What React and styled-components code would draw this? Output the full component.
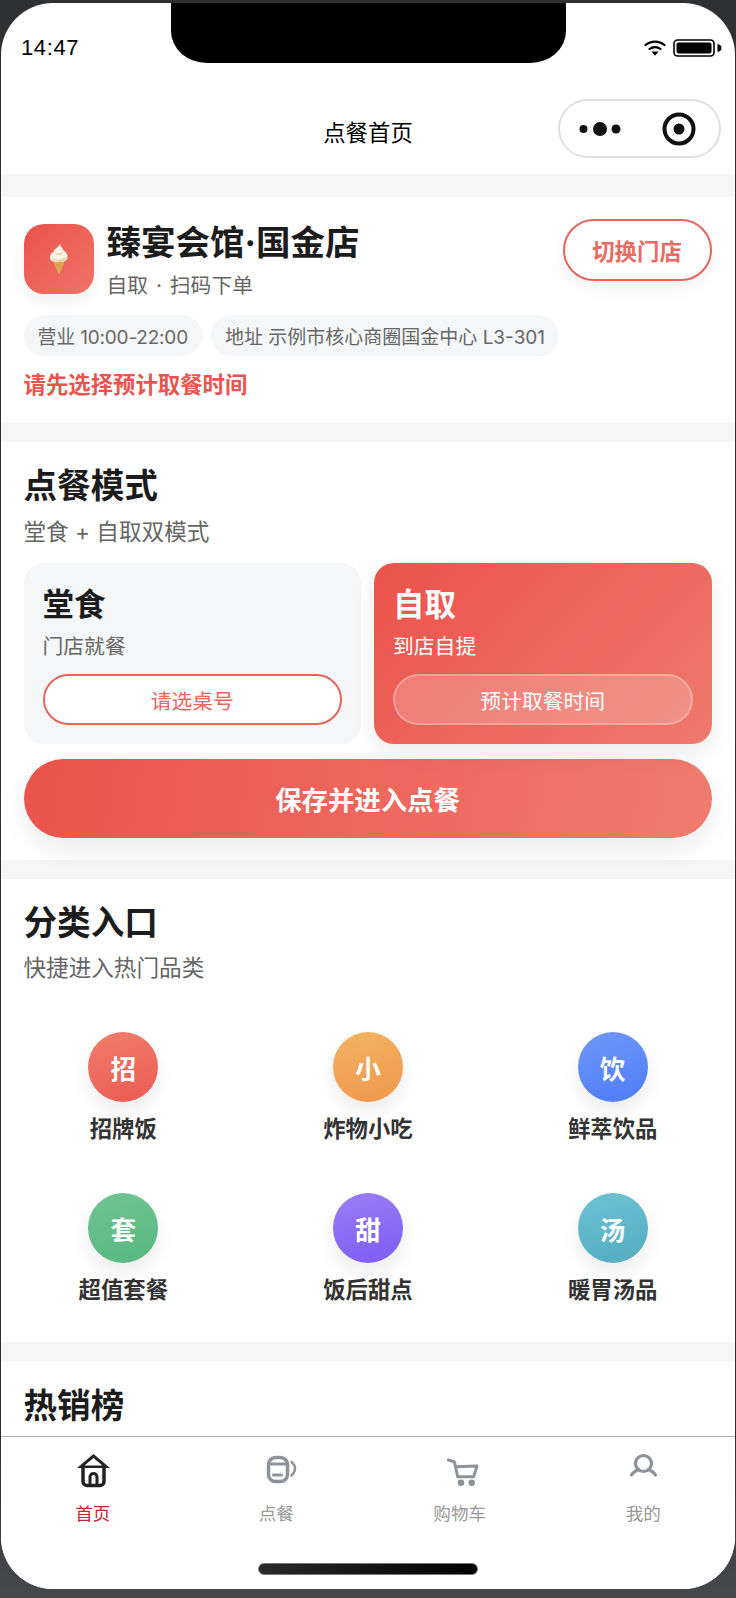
import React from "react";
import styled, { createGlobalStyle } from "styled-components";

const Global = createGlobalStyle`
  html, body { margin: 0; padding: 0; }
  body { font-family: Inter, "Noto Sans CJK SC", sans-serif; }
  * { box-sizing: border-box; }
`;
const Frame = styled.div`
  width: 736px; height: 1598px; padding: 3px 1px 9px;
  background: linear-gradient(180deg, #2f3032 0%, #2f3032 90%, #48494c 100%);
  overflow: hidden;
`;
const Phone = styled.div`
  position: relative; width: 734px; height: 1586px; background: #fff;
  border-radius: 52px; overflow: hidden; display: flex; flex-direction: column;
`;
const Notch = styled.div`
  position: absolute; top: 0; left: 170px; width: 395px; height: 60px;
  background: #000; border-radius: 0 0 36px 36px / 0 0 32px 32px;
`;
const StatusRow = styled.div`
  height: 90px; flex: none; display: flex; align-items: center; justify-content: space-between;
  padding: 0 13px 0 20px;
`;
const Time = styled.span`
  font: 400 22px "Liberation Sans", sans-serif; color: #000; letter-spacing: 0.6px;
`;
const StatusIcons = styled.div`display: flex; align-items: center; gap: 7px;`;
const NavRow = styled.div`
  height: 81px; flex: none; display: grid; grid-template-columns: 1fr auto 1fr; align-items: center;
  padding: 0 14px;
`;
const NavTitle = styled.div`
  grid-column: 2; font-size: 22.4px; font-weight: 400; color: #000; line-height: 30px; margin-bottom: 2px;
`;
const Capsule = styled.div`
  grid-column: 3; justify-self: end; width: 163px; height: 59px; margin-bottom: 10px;
  border: 2.5px solid #e0e0e0; border-radius: 30px; display: flex; align-items: center;
  padding: 0 23px 0 19px; justify-content: space-between; background: #fff;
`;
const Main = styled.main`
  flex: 1; min-height: 0; overflow: hidden; background: #f6f6f6; padding-top: 23px;
  display: flex; flex-direction: column; gap: 19px;
`;
const Section = styled.section`
  flex: none; background: #fff; padding: ${p => p.$pt ?? 22}px 23.5px ${p => p.$pb ?? 23}px 22.5px;
`;
const StoreHead = styled.div`display: flex; align-items: flex-start; gap: 13px;`;
const StoreLogo = styled.div`
  width: 70px; height: 70px; margin-top: 5px; flex: none; border-radius: 20px;
  background: linear-gradient(135deg, #eb524c, #ef7468);
  display: flex; align-items: center; justify-content: center;
  box-shadow: 0 8px 18px rgba(0,0,0,.06);
`;
const StoreInfo = styled.div`flex: 1; padding-top: 4px;`;
const StoreName = styled.div`
  font-size: 34.5px; font-weight: 700; color: #1c1c1c; line-height: 40px;
`;
const StoreSub = styled.div`
  margin-top: 12px; font-size: 20.8px; line-height: 22px; color: #666; word-spacing: 2px;
`;
const SwitchBtn = styled.div`
  width: 149px; height: 62px; flex: none; border: 2px solid #e5655d; border-radius: 31px;
  display: flex; align-items: center; justify-content: center; background: #fff;
  font-size: 22.4px; font-weight: 700; color: #e96a60; box-shadow: 0 8px 18px rgba(0,0,0,.05);
`;
const Chips = styled.div`display: flex; gap: 9px; margin-top: 18px;`;
const Chip = styled.div`
  height: 41px; padding: 0 14px; border-radius: 21px; background: #f5f6f8; color: #666;
  font-size: 19px; display: flex; align-items: center; white-space: nowrap;
  letter-spacing: ${p => p.$tight ? "-0.2px" : "0"};
`;
const Warning = styled.div`
  margin-top: 14px; font-size: 22.4px; line-height: 30px; font-weight: 700; color: #e8554e;
`;
const Title = styled.h2`
  margin: 0; font-size: 33.6px; line-height: 44px; font-weight: 700; color: #1c1c1c;
`;
const Sub = styled.div`
  margin-top: ${p => p.$mt ?? 9}px; font-size: 22.6px; line-height: 30px; color: #666;
`;
const ModeGrid = styled.div`
  display: grid; grid-template-columns: 1fr 1fr; gap: 13px; margin-top: 16px;
`;
const ModeCard = styled.div`
  height: 181px; border-radius: 20px; padding: 22px 19px 18px 19px;
  background: ${p => p.$active ? "linear-gradient(135deg, #eb524c, #ee7a6c)" : "#f5f6f8"};
  box-shadow: ${p => p.$active ? "0 10px 24px rgba(0,0,0,.08)" : "none"};
  color: ${p => p.$active ? "#fff" : "#1c1c1c"};
`;
const ModeName = styled.div`font-size: 31.5px; font-weight: 700; line-height: 40px;`;
const ModeDesc = styled.div`
  margin-top: 8px; font-size: 20.8px; line-height: 28px;
  color: ${p => p.$active ? "#fff" : "#666"};
`;
const ModeBtn = styled.div`
  margin-top: 13px; height: 51px; border-radius: 26px; display: flex; align-items: center; justify-content: center;
  font-size: 20.8px;
  border: 2px solid ${p => p.$active ? "rgba(255,255,255,.25)" : "#e5655d"};
  background: ${p => p.$active ? "rgba(255,255,255,.2)" : "#fff"};
  color: ${p => p.$active ? "#fff" : "#e9665e"};
`;
const Cta = styled.div`
  margin-top: 15px; height: 79px; border-radius: 40px; display: flex; align-items: center; justify-content: center;
  background: linear-gradient(100deg, #eb524c, #ef7c6e); color: #fff; font-size: 26.4px; font-weight: 700;
  box-shadow: 0 12px 26px rgba(0,0,0,.08);
`;
const CatGrid = styled.div`
  margin: 49px -23.5px 0 -22.5px; display: grid; grid-template-columns: repeat(3, 1fr); row-gap: 49.5px;
`;
const Cat = styled.div`display: flex; flex-direction: column; align-items: center;`;
const CatDot = styled.div`
  width: 70px; height: 70px; border-radius: 50%; display: flex; align-items: center; justify-content: center;
  color: #fff; font-size: 25.6px; font-weight: 700;
  background: linear-gradient(165deg, ${p => p.$from}, ${p => p.$to});
  box-shadow: 0 10px 20px rgba(0,0,0,.08);
`;
const CatLabel = styled.div`
  margin-top: 11.5px; font-size: 22.4px; line-height: 30px; font-weight: 700; color: #333;
`;
const TabBar = styled.nav`
  flex: none; height: 153px; border-top: 1px solid #b3b3b3; background: #fff;
  display: flex; flex-direction: column; align-items: center;
`;
const Tabs = styled.div`
  align-self: stretch; display: grid; grid-template-columns: repeat(4, 1fr); padding-top: 15px;
`;
const Tab = styled.div`display: flex; flex-direction: column; align-items: center;`;
const TabIcon = styled.svg`width: 40px; height: 36px; overflow: visible; display: block;`;
const TabLabel = styled.div`
  margin-top: 13px; font-size: 17.6px; line-height: 26px;
  color: ${p => p.$active ? "#c9252f" : "#999"};
`;
const HomeBar = styled.div`
  margin-top: 36px; width: 220px; height: 12px; border-radius: 6px; border: 1px solid #777;
  background: linear-gradient(90deg, #2a2a2a, #000);
`;

const cats = [
  ["招", "招牌饭", "#ef7d6b", "#ec5b53"],
  ["小", "炸物小吃", "#f2b366", "#f0974a"],
  ["饮", "鲜萃饮品", "#6f98f8", "#4f7bf6"],
  ["套", "超值套餐", "#70c594", "#57b77f"],
  ["甜", "饭后甜点", "#9c7df5", "#7b5cf2"],
  ["汤", "暖胃汤品", "#6dc3d3", "#54abc0"],
];

const stroke = { fill: "none", strokeLinecap: "round", strokeLinejoin: "round" };
const HomeIcon = () => (
  <TabIcon viewBox="0 0 40 36">
    <path d="M4 16 20.500 2 37 16Z" fill="#222" />
    <path d="M11.500 13.500 20.500 6 29.500 13.500Z" fill="#fff" />
    <g {...stroke} stroke="#222">
      <path d="M10 15v14.500a4 4 0 0 0 4 4h13a4 4 0 0 0 4-4V15" strokeWidth="3.500" />
      <path d="M17 32V25a3.500 3.500 0 0 1 7 0V32" strokeWidth="3" />
    </g>
  </TabIcon>
);
const DrinkIcon = () => (
  <TabIcon viewBox="0 0 40 36">
    <g {...stroke} stroke="#8e9299">
      <rect x="12.500" y="5.500" width="19" height="24" rx="7" strokeWidth="3.500" />
      <path d="M12.500 12h19" strokeWidth="3" />
      <path d="M17.500 23h8" strokeWidth="3" />
      <path d="M35.500 10c2.500 2 3.500 4 3.500 6.500s-1 4.500-3.500 7" strokeWidth="2.500" />
    </g>
  </TabIcon>
);
const CartIcon = () => (
  <TabIcon viewBox="0 0 40 36">
    <g {...stroke} stroke="#8e9299" strokeWidth="3">
      <path d="M8.300 8 14.300 9.700 17.700 24.700H33.700L37 14 15.700 14.700" />
    </g>
    <circle cx="21" cy="30.700" r="3.200" fill="#8e9299" />
    <circle cx="31.700" cy="30.700" r="3.200" fill="#8e9299" />
  </TabIcon>
);
const UserIcon = () => (
  <TabIcon viewBox="0 0 40 36">
    <g {...stroke} stroke="#8e9299" strokeWidth="3.200">
      <circle cx="20.500" cy="11.500" r="8" />
      <path d="M8.500 23c1.500-2.500 3.500-4 7-5.500M32.500 23c-1.500-2.500-3.500-4-7-5.500" />
    </g>
  </TabIcon>
);
const tabs = [
  ["首页", HomeIcon, true],
  ["点餐", DrinkIcon, false],
  ["购物车", CartIcon, false],
  ["我的", UserIcon, false],
];

const IceCream = () => (
  <svg width="20" height="32" viewBox="0 0 20 32">
    <path d="M4 17.500 10 31.800 16 17.500Z" fill="#e0aa55" />
    <path d="M6 20.500l7.500 4M12 19l-4.500 5" stroke="#c8913c" strokeWidth=".5" fill="none" />
    <path d="M11 1c.500 3 3 4 3.500 6.500 2.500 1.500 4.500 4 4 7-.500 3.500-3 4.500-9 4.500S1.500 18 1 15c-.500-3 1.500-5 3.500-6C5 5.500 9 5 11 1Z" fill="#f8f3e2" />
    <path d="M3 15.500c4 2 10 1.500 15-2-.500 4-3 5.500-8 5.500-4 0-6.500-1-7-3.500ZM6 9.500c3 1.500 6 1 8-1.500.300 2.500-2 4-4 4s-3.500-1-4-2.500Z" fill="#dfd6b0" />
  </svg>
);

export default function App() {
  return (
    <>
      <Global />
      <Frame>
        <Phone>
          <Notch />
          <StatusRow>
            <Time>14:47</Time>
            <StatusIcons>
              <svg width="22" height="16" viewBox="0 0 22 16">
                <g fill="none" stroke="#000" strokeWidth="2.200" strokeLinecap="round">
                  <path d="M1.500 5C7 .5 15 .5 20.500 5" />
                  <path d="M5.500 9c3-2.500 8-2.500 11 0" />
                </g>
                <path d="M7.500 11.500h7L11 15.800Z" fill="#000" />
              </svg>
              <svg width="49" height="18" viewBox="0 0 49 18">
                <rect x="1" y="1" width="40" height="16" rx="3.500" fill="#fff" stroke="#000" strokeWidth="1.600" />
                <rect x="3.500" y="3.500" width="35" height="11" rx="2" fill="#000" />
                <path d="M44.500 5c2.500.5 4 2 4 4s-1.500 3.500-4 4Z" fill="#000" />
              </svg>
            </StatusIcons>
          </StatusRow>
          <NavRow>
            <NavTitle>点餐首页</NavTitle>
            <Capsule>
              <svg width="48" height="16" viewBox="0 0 48 16">
                <circle cx="4.500" cy="8" r="4" fill="#111" />
                <circle cx="21" cy="8" r="7" fill="#111" />
                <circle cx="37" cy="8" r="4.500" fill="#111" />
              </svg>
              <svg width="34" height="34" viewBox="0 0 34 34">
                <circle cx="17" cy="17" r="14.500" fill="none" stroke="#111" strokeWidth="4" />
                <circle cx="17" cy="17" r="5.500" fill="#111" />
              </svg>
            </Capsule>
          </NavRow>
          <Main>
            <Section>
              <StoreHead>
                <StoreLogo><IceCream /></StoreLogo>
                <StoreInfo>
                  <StoreName>臻宴会馆·国金店</StoreName>
                  <StoreSub>自取 · 扫码下单</StoreSub>
                </StoreInfo>
                <SwitchBtn>切换门店</SwitchBtn>
              </StoreHead>
              <Chips>
                <Chip $tight>营业 10:00-22:00</Chip>
                <Chip>地址 示例市核心商圈国金中心 L3-301</Chip>
              </Chips>
              <Warning>请先选择预计取餐时间</Warning>
            </Section>
            <Section $pb={22}>
              <Title>点餐模式</Title>
              <Sub>堂食 + 自取双模式</Sub>
              <ModeGrid>
                <ModeCard>
                  <ModeName>堂食</ModeName>
                  <ModeDesc>门店就餐</ModeDesc>
                  <ModeBtn>请选桌号</ModeBtn>
                </ModeCard>
                <ModeCard $active>
                  <ModeName>自取</ModeName>
                  <ModeDesc $active>到店自提</ModeDesc>
                  <ModeBtn $active>预计取餐时间</ModeBtn>
                </ModeCard>
              </ModeGrid>
              <Cta>保存并进入点餐</Cta>
            </Section>
            <Section $pb={37.5}>
              <Title>分类入口</Title>
              <Sub $mt={8}>快捷进入热门品类</Sub>
              <CatGrid>
                {cats.map(([ch, label, from, to]) => (
                  <Cat key={label}>
                    <CatDot $from={from} $to={to}>{ch}</CatDot>
                    <CatLabel>{label}</CatLabel>
                  </Cat>
                ))}
              </CatGrid>
            </Section>
            <Section $pt={23}>
              <Title>热销榜</Title>
            </Section>
          </Main>
          <TabBar>
            <Tabs>
              {tabs.map(([label, Icon, active]) => (
                <Tab key={label}>
                  <Icon />
                  <TabLabel $active={active}>{label}</TabLabel>
                </Tab>
              ))}
            </Tabs>
            <HomeBar />
          </TabBar>
        </Phone>
      </Frame>
    </>
  );
}
